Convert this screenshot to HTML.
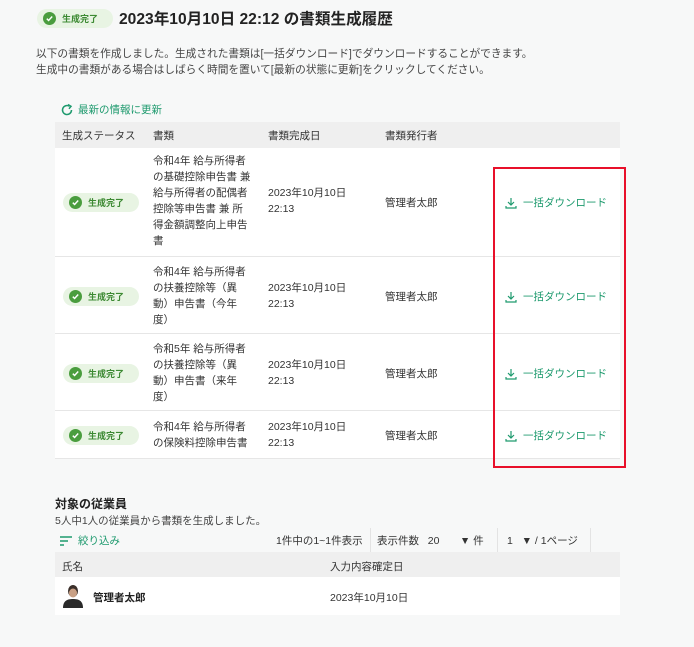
<!DOCTYPE html>
<html><head><meta charset="utf-8"><style>
*{margin:0;padding:0;box-sizing:border-box}
body{width:694px;height:647px;background:#f7f8f8;font-family:"Liberation Sans","Noto Sans CJK JP",sans-serif;color:#333;font-size:10.5px;position:relative;overflow:hidden}
.a{position:absolute;white-space:nowrap}
.badge{position:absolute;background:#e8f4e3;border-radius:10px;height:19px;width:76px;color:#3d8a33;font-size:9px;font-weight:bold;display:flex;align-items:center;padding-left:6px;gap:6px}
.chk{width:13px;height:13px;border-radius:50%;background:#4a9d3e;display:flex;align-items:center;justify-content:center}
.g{color:#1e9a6e}
.row{position:absolute;left:55px;width:565px;background:#fff;border-bottom:1px solid #e6e6e6}
.doc{position:absolute;left:153px;line-height:16px;font-size:10.5px}
</style></head><body>
<div class="badge" style="left:37px;top:9px"><span class="chk"><svg width="9" height="9" viewBox="0 0 10 10"><path d="M2 5.2l2 2 4-4.4" stroke="#fff" stroke-width="1.6" fill="none"/></svg></span>生成完了</div>
<div class="a" style="left:119px;top:7px;font-size:15.6px;font-weight:bold;color:#222">2023年10月10日 22:12 の書類生成履歴</div>
<div class="a" style="left:36px;top:46px;line-height:16px;font-size:10.7px;color:#444">以下の書類を作成しました。生成された書類は[一括ダウンロード]でダウンロードすることができます。<br>生成中の書類がある場合はしばらく時間を置いて[最新の状態に更新]をクリックしてください。</div>
<div class="a g" style="left:60px;top:102px;font-size:10.5px;display:flex;align-items:center;gap:4px"><svg width="14" height="14" viewBox="0 0 14 14"><path d="M11.5 7A4.5 4.5 0 1 1 9.5 3.3" stroke="#1e9a6e" stroke-width="1.5" fill="none"/><path d="M8 1.5l3 1.8-2 2.5" stroke="#1e9a6e" stroke-width="1.5" fill="none"/></svg>最新の情報に更新</div>
<div class="a" style="left:55px;top:122px;width:565px;height:26px;background:#efefef"></div>
<div class="a" style="left:62px;top:128px">生成ステータス</div>
<div class="a" style="left:153px;top:128px">書類</div>
<div class="a" style="left:268px;top:128px">書類完成日</div>
<div class="a" style="left:385px;top:128px">書類発行者</div>

<div class="row" style="top:148px;height:109px"></div>
<div class="row" style="top:257px;height:77px"></div>
<div class="row" style="top:334px;height:77px"></div>
<div class="row" style="top:411px;height:48px"></div>

<div class="badge" style="left:63px;top:193px">
<span class="chk"><svg width="9" height="9" viewBox="0 0 10 10"><path d="M2 5.2l2 2 4-4.4" stroke="#fff" stroke-width="1.6" fill="none"/></svg></span>生成完了</div>
<div class="doc" style="top:153px">令和4年 給与所得者<br>の基礎控除申告書 兼<br>給与所得者の配偶者<br>控除等申告書 兼 所<br>得金額調整向上申告<br>書</div>
<div class="a" style="left:268px;top:185px;line-height:16px">2023年10月10日<br>22:13</div>
<div class="a" style="left:385px;top:195px">管理者太郎</div>

<div class="badge" style="left:63px;top:287px"><span class="chk"><svg width="9" height="9" viewBox="0 0 10 10"><path d="M2 5.2l2 2 4-4.4" stroke="#fff" stroke-width="1.6" fill="none"/></svg></span>生成完了</div>
<div class="doc" style="top:264px">令和4年 給与所得者<br>の扶養控除等（異<br>動）申告書（今年<br>度）</div>
<div class="a" style="left:268px;top:280px;line-height:16px">2023年10月10日<br>22:13</div>
<div class="a" style="left:385px;top:289px">管理者太郎</div>

<div class="badge" style="left:63px;top:364px"><span class="chk"><svg width="9" height="9" viewBox="0 0 10 10"><path d="M2 5.2l2 2 4-4.4" stroke="#fff" stroke-width="1.6" fill="none"/></svg></span>生成完了</div>
<div class="doc" style="top:341px">令和5年 給与所得者<br>の扶養控除等（異<br>動）申告書（来年<br>度）</div>
<div class="a" style="left:268px;top:357px;line-height:16px">2023年10月10日<br>22:13</div>
<div class="a" style="left:385px;top:366px">管理者太郎</div>

<div class="badge" style="left:63px;top:426px"><span class="chk"><svg width="9" height="9" viewBox="0 0 10 10"><path d="M2 5.2l2 2 4-4.4" stroke="#fff" stroke-width="1.6" fill="none"/></svg></span>生成完了</div>
<div class="doc" style="top:419px">令和4年 給与所得者<br>の保険料控除申告書</div>
<div class="a" style="left:268px;top:419px;line-height:16px">2023年10月10日<br>22:13</div>
<div class="a" style="left:385px;top:428px">管理者太郎</div>

<div class="a g" style="left:505px;top:195px;display:flex;gap:6px;align-items:center"><svg width="12" height="12" viewBox="0 0 12 12"><path d="M6 1v7M3 5l3 3 3-3M1 9v2h10V9" stroke="#1e9a6e" stroke-width="1.2" fill="none"/></svg>一括ダウンロード</div>
<div class="a g" style="left:505px;top:289px;display:flex;gap:6px;align-items:center"><svg width="12" height="12" viewBox="0 0 12 12"><path d="M6 1v7M3 5l3 3 3-3M1 9v2h10V9" stroke="#1e9a6e" stroke-width="1.2" fill="none"/></svg>一括ダウンロード</div>
<div class="a g" style="left:505px;top:366px;display:flex;gap:6px;align-items:center"><svg width="12" height="12" viewBox="0 0 12 12"><path d="M6 1v7M3 5l3 3 3-3M1 9v2h10V9" stroke="#1e9a6e" stroke-width="1.2" fill="none"/></svg>一括ダウンロード</div>
<div class="a g" style="left:505px;top:428px;display:flex;gap:6px;align-items:center"><svg width="12" height="12" viewBox="0 0 12 12"><path d="M6 1v7M3 5l3 3 3-3M1 9v2h10V9" stroke="#1e9a6e" stroke-width="1.2" fill="none"/></svg>一括ダウンロード</div>
<div class="a" style="left:493px;top:167px;width:133px;height:301px;border:2px solid #e8102a"></div>

<div class="a" style="left:55px;top:495px;font-size:12px;font-weight:bold;color:#222">対象の従業員</div>
<div class="a" style="left:55px;top:513px;color:#444">5人中1人の従業員から書類を生成しました。</div>
<div class="a g" style="left:60px;top:533px;display:flex;gap:6px;align-items:center"><svg width="12" height="10" viewBox="0 0 12 10"><path d="M0 1h12M0 5h8M0 9h4" stroke="#1e9a6e" stroke-width="1.4"/></svg>絞り込み</div>
<div class="a" style="left:276px;top:533px">1件中の1~1件表示</div>
<div class="a" style="left:370px;top:528px;width:1px;height:24px;background:#e3e3e3"></div>
<div class="a" style="left:377px;top:533px">表示件数 &nbsp; 20 &nbsp; &nbsp; &nbsp; ▼ 件</div>
<div class="a" style="left:497px;top:528px;width:1px;height:24px;background:#e3e3e3"></div>
<div class="a" style="left:507px;top:533px">1 &nbsp; ▼ / 1ページ</div>
<div class="a" style="left:590px;top:528px;width:1px;height:24px;background:#e3e3e3"></div>
<div class="a" style="left:55px;top:552px;width:565px;height:25px;background:#efefef"></div>
<div class="a" style="left:62px;top:559px">氏名</div>
<div class="a" style="left:330px;top:559px">入力内容確定日</div>
<div class="a" style="left:55px;top:577px;width:565px;height:38px;background:#fff"></div>
<svg class="a" style="left:62px;top:584px" width="22" height="24" viewBox="0 0 22 24"><ellipse cx="11" cy="7" rx="5" ry="6" fill="#3a2f2a"/><ellipse cx="11" cy="9" rx="4" ry="4.5" fill="#c9a085"/><path d="M1 24c0-7 4-9 10-9s10 2 10 9z" fill="#2a2a2a"/></svg>
<div class="a" style="left:93px;top:590px;font-weight:bold;color:#222">管理者太郎</div>
<div class="a" style="left:330px;top:590px">2023年10月10日</div>
</body></html>
